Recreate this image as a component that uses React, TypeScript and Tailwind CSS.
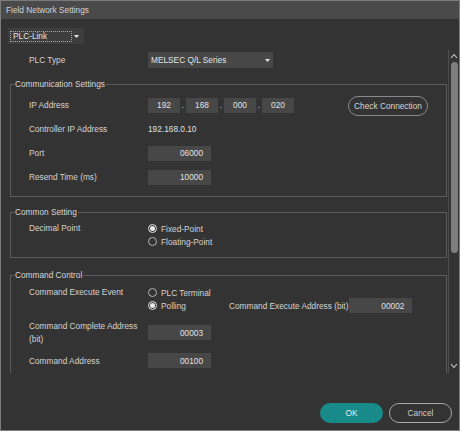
import React from 'react';

const Caret: React.FC = () => (
  <svg width="5" height="3" viewBox="0 0 5 3" className="shrink-0">
    <path d="M0 0 H5 L2.5 3 Z" fill="#e6e6e6" />
  </svg>
);

const Field: React.FC<{ value: string; w?: string; center?: boolean }> = ({ value, w = 'w-[63px]', center }) => (
  <div
    className={`${w} h-[15px] shrink-0 bg-[#474747] flex items-center text-[#e2e2e2] ${center ? 'justify-center' : 'justify-end pr-[8px]'}`}
  >
    {value}
  </div>
);

const Radio: React.FC<{ label: string; checked?: boolean }> = ({ label, checked }) => (
  <div className="flex items-center gap-[4px] h-[13px]">
    <span
      className={`w-[9px] h-[9px] rounded-full border flex items-center justify-center ${checked ? 'border-[#e6e6e6]' : 'border-[#b4b4b4]'}`}
    >
      {checked && <span className="w-[5px] h-[5px] rounded-full bg-[#ececec]" />}
    </span>
    <span>{label}</span>
  </div>
);

const Group: React.FC<{ title: string; className?: string; children: React.ReactNode }> = ({ title, className, children }) => (
  <fieldset className={`ml-[9px] mr-[1px] border border-[#5c5c5c] ${className ?? ''}`}>
    <legend className="ml-[3px] px-[1px] leading-[10px] text-[#d8d8d8]">{title}</legend>
    {children}
  </fieldset>
);

const Row: React.FC<{ label: React.ReactNode; children?: React.ReactNode; h?: string }> = ({ label, children, h = 'h-[24px]' }) => (
  <div className={`flex items-center ${h}`}>
    <div className="w-[119px] shrink-0">{label}</div>
    {children}
  </div>
);

const App: React.FC = () => {
  const ip = ['192', '168', '000', '020'];

  return (
    <div className="w-[460px] h-[431px] bg-[#333333] border border-[#7c7c7c] flex flex-col overflow-hidden font-['Liberation_Sans',Arial,sans-serif] text-[8.3px] leading-[12px] text-[#d4d4d4]">
      {/* Title bar */}
      <div className="h-[18px] shrink-0 bg-[#4a4a4a] flex items-center pl-[5px] text-[#d2d2d2]">Field Network Settings</div>

      {/* Network selector */}
      <div className="pt-[9px] pl-[7px] shrink-0">
        <div className="w-[76px] h-[16px] bg-[#3d3d3d] flex items-center pl-[2px] pr-[3px]">
          <div className="w-[62px] h-[11px] border border-dotted border-[#a8a8a8] flex items-center pl-[2px] text-[#e4e4e4]">
            PLC-Link
          </div>
          <div className="flex-1 flex justify-center">
            <Caret />
          </div>
        </div>
      </div>

      {/* Scroll area */}
      <div className="mt-[6px] h-[323px] shrink-0 flex">
        <div className="flex-1 overflow-hidden pt-[2px]">
          <div className="flex items-center h-[16px] pl-[28px]">
            <div className="w-[119px] shrink-0">PLC Type</div>
            <div className="w-[125px] h-[16px] bg-[#474747] flex items-center justify-between pl-[3px] pr-[3px] text-[#e2e2e2]">
              <span>MELSEC Q/L Series</span>
              <Caret />
            </div>
          </div>

          <Group title="Communication Settings" className="mt-[11px]">
            <div className="pl-[18px] pt-[4px] pb-[7px]">
              <Row label="IP Address">
                <div className="flex items-center">
                  {ip.map((v, i) => (
                    <React.Fragment key={i}>
                      {i > 0 && <div className="w-[6px] text-center">.</div>}
                      <Field value={v} w="w-[32px]" center />
                    </React.Fragment>
                  ))}
                </div>
                <button className="ml-[54px] mt-[2px] w-[80px] h-[20px] rounded-full border border-[#8a8a8a] text-[#d6d6d6]">
                  Check Connection
                </button>
              </Row>
              <Row label="Controller IP Address">
                <span className="text-[#e0e0e0]">192.168.0.10</span>
              </Row>
              <Row label="Port">
                <Field value="06000" />
              </Row>
              <Row label="Resend Time (ms)">
                <Field value="10000" />
              </Row>
            </div>
          </Group>

          <Group title="Common Setting" className="mt-[10px]">
            <div className="pl-[18px] pt-[5px] pb-[9px] flex items-start">
              <div className="w-[119px] shrink-0 leading-[13px]">Decimal Point</div>
              <div className="flex flex-col">
                <Radio label="Fixed-Point" checked />
                <Radio label="Floating-Point" />
              </div>
            </div>
          </Group>

          <Group title="Command Control" className="mt-[12px]">
            <div className="pl-[18px] pt-[6px] pb-[60px]">
              <div className="flex items-start">
                <div className="w-[119px] shrink-0 leading-[13px]">Command Execute Event</div>
                <div className="flex flex-col">
                  <Radio label="PLC Terminal" />
                  <div className="flex items-center h-[13px]">
                    <div className="w-[81px] shrink-0">
                      <Radio label="Polling" checked />
                    </div>
                    <div className="whitespace-nowrap mr-[1px]">Command Execute Address (bit)</div>
                    <Field value="00002" />
                  </div>
                </div>
              </div>
              <div className="flex items-center mt-[8px]">
                <div className="w-[119px] shrink-0 leading-[12.5px]">
                  Command Complete Address
                  <br />
                  (bit)
                </div>
                <Field value="00003" />
              </div>
              <Row label="Command Address" h="h-[15px] mt-[8px]">
                <Field value="00100" />
              </Row>
            </div>
          </Group>
        </div>

        {/* Scrollbar */}
        <div className="w-[11px] shrink-0 pt-[3px] flex flex-col items-center border-l border-[#4e4e4e]">
          <svg width="8" height="6" viewBox="0 0 8 6">
            <path d="M1 5 L4 1.5 L7 5" fill="none" stroke="#cfcfcf" strokeWidth="1.1" />
          </svg>
          <div className="mt-[3px] w-[7px] h-[191px] rounded-full bg-[#7e7e7e]" />
          <div className="flex-1" />
          <svg width="8" height="6" viewBox="0 0 8 6" className="mb-[4px]">
            <path d="M1 1 L4 4.5 L7 1" fill="none" stroke="#cfcfcf" strokeWidth="1.1" />
          </svg>
        </div>
      </div>

      {/* Footer */}
      <div className="flex-1 flex items-end justify-end gap-[6px] pr-[7px] pb-[7px]">
        <button className="w-[63px] h-[20px] rounded-full bg-[#198a8a] text-[#ededed]">OK</button>
        <button className="w-[63px] h-[20px] rounded-full border-[1.5px] border-[#a8a8a8] text-[#cfcfcf]">Cancel</button>
      </div>
    </div>
  );
};

export default App;
